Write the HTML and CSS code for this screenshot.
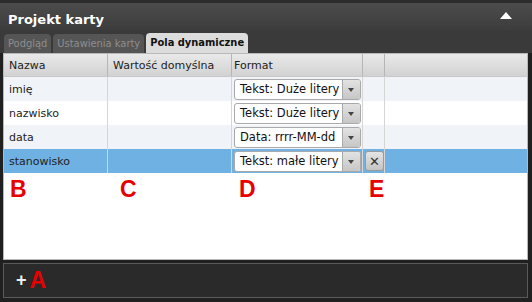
FILE: index.html
```html
<!DOCTYPE html>
<html>
<head>
  <title>Projekt karty</title>
  <link rel="stylesheet" href="styles.css">
</head>
<body>
  <div class="window">
    <div class="titlebar">
      <span class="title">Projekt karty</span>
      <svg class="collapse" width="12" height="8" viewBox="0 0 12 8"><polygon points="6,0 12,7 0,7" fill="#fff"/></svg>
    </div>

    <div class="tabs">
      <div class="tab">Podgląd</div>
      <div class="tab">Ustawienia karty</div>
      <div class="tab active">Pola dynamiczne</div>
    </div>

    <div class="panel">
      <div class="grid">
        <div class="row head">
          <div class="cell c-name">Nazwa</div>
          <div class="cell c-def">Wartość domyślna</div>
          <div class="cell c-fmt">Format</div>
          <div class="cell c-del"></div>
          <div class="cell c-rest"></div>
        </div>
        <div class="row alt">
          <div class="cell c-name">imię</div>
          <div class="cell c-def"></div>
          <div class="cell c-fmt"><div class="combo"><span>Tekst: Duże litery</span><b class="arrow"></b></div></div>
          <div class="cell c-del"></div>
          <div class="cell c-rest"></div>
        </div>
        <div class="row">
          <div class="cell c-name">nazwisko</div>
          <div class="cell c-def"></div>
          <div class="cell c-fmt"><div class="combo"><span>Tekst: Duże litery</span><b class="arrow"></b></div></div>
          <div class="cell c-del"></div>
          <div class="cell c-rest"></div>
        </div>
        <div class="row alt">
          <div class="cell c-name">data</div>
          <div class="cell c-def"></div>
          <div class="cell c-fmt"><div class="combo"><span>Data: rrrr-MM-dd</span><b class="arrow"></b></div></div>
          <div class="cell c-del"></div>
          <div class="cell c-rest"></div>
        </div>
        <div class="row selected">
          <div class="cell c-name">stanowisko</div>
          <div class="cell c-def"></div>
          <div class="cell c-fmt"><div class="combo"><span>Tekst: małe litery</span><b class="arrow"></b></div></div>
          <div class="cell c-del"><div class="del-btn">&#x2715;</div></div>
          <div class="cell c-rest"></div>
        </div>
      </div>

      <div class="labels">
        <span class="mark c-name">B</span>
        <span class="mark c-def">C</span>
        <span class="mark c-fmt">D</span>
        <span class="mark c-del">E</span>
      </div>
    </div>

    <div class="footer">
      <span class="plus">+</span><span class="mark">A</span>
    </div>
  </div>
</body>
</html>
```

FILE: styles.css
```css
body {
  margin: 0;
  background-color: #1a1a1a;
  font-family: "DejaVu Sans", sans-serif;
}
.window {
  width: 532px;
  height: 302px;
  background-color: #202020;
  border-top: 3px solid #2c2c2c;
  box-sizing: border-box;
  overflow: hidden;
}
.titlebar {
  display: flex;
  align-items: center;
  justify-content: space-between;
  height: 27px;
  padding: 5px 20px 0 8px;
  background: linear-gradient(#4c4c4c, #3c3c3c);
  box-sizing: border-box;
}
.collapse {
  margin-top: -6px;
}
.title {
  color: #fff;
  font-size: 13px;
  font-weight: bold;
}
.tabs {
  display: flex;
  gap: 2px;
  height: 23px;
  padding: 3px 0 0 4px;
  align-items: flex-end;
  background-color: #3a3a3a;
  box-sizing: border-box;
}
.tab {
  height: 19px;
  padding: 0 4px;
  line-height: 19px;
  font-family: "DejaVu Sans Condensed", "DejaVu Sans", sans-serif;
  font-size: 11px;
  color: #8e8e8e;
  background-color: #555;
  border-radius: 4px 4px 0 0;
}
.tab.active {
  height: 20px;
  line-height: 20px;
  color: #111;
  font-weight: bold;
  background-color: #dcdcdc;
}
.panel {
  margin: 0 4px 0 3px;
  height: 207px;
  background-color: #fff;
  border: 1px solid #b8b8b8;
  box-sizing: border-box;
}
.row {
  display: flex;
  height: 24px;
  font-size: 11px;
  color: #222;
}
.row.head {
  height: 22px;
  background: linear-gradient(#e9e9e9, #d2d2d2);
  border-bottom: 1px solid #c8c8c8;
}
.row.alt {
  background-color: #f0f4f8;
}
.row.selected {
  background-color: #6eb1e2;
}
.cell {
  display: flex;
  align-items: center;
  padding-left: 5px;
  border-right: 1px solid #d6d6d6;
  box-sizing: border-box;
}
.head .cell {
  border-right-color: #b6b6b6;
}
.c-name { width: 104px; }
.c-def { width: 124px; }
.c-fmt { width: 131px; padding-left: 2px; }
.c-del { width: 22px; padding-left: 2px; }
.c-rest { flex: 1; border-right: none; }
.combo {
  display: flex;
  width: 127px;
  height: 21px;
  background-color: #fff;
  border: 1px solid #a9a9a9;
  border-radius: 3px;
  box-sizing: border-box;
  overflow: hidden;
}
.combo span {
  flex: 1;
  padding-left: 5px;
  line-height: 19px;
  font-size: 11.5px;
  color: #111;
  white-space: nowrap;
}
.arrow {
  width: 17px;
  background: linear-gradient(#e2e2e2, #c6c6c6);
  border-left: 1px solid #a9a9a9;
  position: relative;
}
.arrow::after {
  content: "";
  position: absolute;
  left: 5px;
  top: 8px;
  border-left: 3px solid transparent;
  border-right: 3px solid transparent;
  border-top: 4px solid #444;
}
.del-btn {
  width: 20px;
  height: 20px;
  line-height: 19px;
  text-align: center;
  font-size: 13px;
  font-weight: bold;
  color: #333;
  background: linear-gradient(#e4e4e4, #c4c4c4);
  border: 1px solid #9a9a9a;
  border-radius: 3px;
  box-sizing: border-box;
}
.labels {
  display: flex;
  padding-top: 3px;
}
.labels .mark {
  box-sizing: border-box;
  padding-left: 6px;
}
.labels .c-def { padding-left: 12px; }
.labels .c-fmt { padding-left: 7px; }
.labels .c-del { padding-left: 6px; }
.mark {
  color: #e80000;
  font-family: "Liberation Sans", Arial, sans-serif;
  font-weight: bold;
  font-size: 23px;
}
.footer {
  display: flex;
  align-items: center;
  margin: 3px 4px 0 3px;
  height: 35px;
  padding-left: 12px;
  background-color: #2a2a2a;
  border: 1px solid #5a5a5a;
  box-sizing: border-box;
}
.plus {
  color: #eee;
  font-family: "Liberation Sans", Arial, sans-serif;
  font-weight: bold;
  font-size: 18px;
  margin-right: 3px;
}
```
